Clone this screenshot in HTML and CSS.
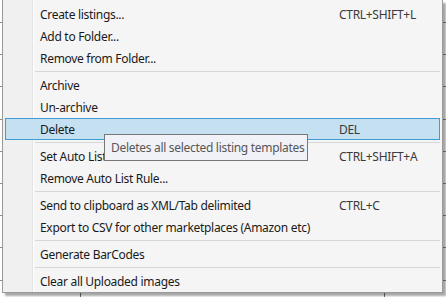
FILE: index.html
```html
<!DOCTYPE html>
<html>
<head>
    <title>Listing context menu</title>
    <link rel="stylesheet" href="styles.css">
</head>
<body>
    <div class="grid-bg">
        <div class="menu">
            <div class="item"><span>Create listings...</span><span class="keys">CTRL+SHIFT+L</span></div>
            <div class="item"><span>Add to Folder...</span></div>
            <div class="item"><span>Remove from Folder...</span></div>
            <div class="sep"></div>
            <div class="item"><span>Archive</span></div>
            <div class="item"><span>Un-archive</span></div>
            <div class="item active"><span>Delete</span><span class="keys">DEL</span></div>
            <div class="sep"></div>
            <div class="item"><span>Set Auto List Rule...</span><span class="keys">CTRL+SHIFT+A</span></div>
            <div class="item"><span>Remove Auto List Rule...</span></div>
            <div class="sep"></div>
            <div class="item"><span>Send to clipboard as XML/Tab delimited</span><span class="keys">CTRL+C</span></div>
            <div class="item"><span>Export to CSV for other marketplaces (Amazon etc)</span></div>
            <div class="sep"></div>
            <div class="item"><span>Generate BarCodes</span></div>
            <div class="sep"></div>
            <div class="item"><span>Clear all Uploaded images</span></div>
        </div>
        <div class="tooltip">Deletes all selected listing templates</div>
    </div>
</body>
</html>
```

FILE: styles.css
```css
* {
    box-sizing: border-box;
}

body {
    margin: 0;
    font-family: "Segoe UI", "Noto Sans", "Open Sans", sans-serif;
    font-size: 12px;
    letter-spacing: -0.3px;
    color: #1a1a1a;
}

.grid-bg {
    position: relative;
    width: 446px;
    height: 297px;
    overflow: hidden;
    background-color: #fff;
    background-image:
        linear-gradient(to right, transparent 80px, #707070 80px, #707070 81px, transparent 81px, transparent 384px, #707070 384px, #707070 385px, transparent 385px),
        repeating-linear-gradient(to bottom, transparent 0, transparent 22px, #8c8c8c 22px, #8c8c8c 23px, transparent 23px, transparent 32.2px);
}

.menu {
    width: 441px;
    margin-left: 2px;
    padding: 3px 0 0;
    border: 1px solid #9a9a9a;
    border-top: none;
    background:
        linear-gradient(to right, #f0f0f0 0, #f0f0f0 29px, #e2e3e3 29px, #e2e3e3 30px, #ffffff 30px, #ffffff 31px, #f5f5f5 31px);
    box-shadow: 3px 3px 2px rgba(0, 0, 0, 0.35);
}

.item {
    display: grid;
    grid-template-columns: 299px 1fr;
    align-items: center;
    height: 22px;
    margin: 0 2px;
    padding-left: 34px;
    border: 1px solid transparent;
    white-space: nowrap;
}

.item.active {
    background: #c5e0f0;
    border-color: #3f9bd6;
}

.keys {
    color: #3a3a3a;
}

.sep {
    height: 1px;
    margin: 2px 2px 2px 32px;
    background: #d7d7d7;
}

.tooltip {
    position: absolute;
    left: 104px;
    top: 134px;
    width: 204px;
    height: 27px;
    padding-left: 6px;
    line-height: 25px;
    border: 1px solid #767676;
    background: #f1f2f7;
    color: #575757;
    white-space: nowrap;
}
```
